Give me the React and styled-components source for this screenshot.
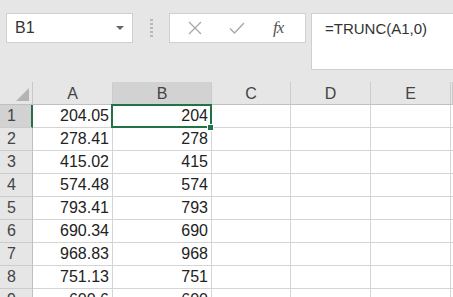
import React from "react";
import styled, { createGlobalStyle } from "styled-components";

const GlobalStyle = createGlobalStyle`
  html, body {
    margin: 0;
    padding: 0;
    background: #e6e6e6;
    overflow: hidden;
  }
  body {
    font-family: "Liberation Sans", Arial, sans-serif;
  }
`;

const Page = styled.div`
  width: 453px;
  height: 297px;
  overflow: hidden;
  background: #e6e6e6;
`;

const FormulaRow = styled.div`
  display: flex;
  align-items: flex-start;
  height: 82px;
  padding: 13px 0 0 6px;
  box-sizing: border-box;
`;

const NameBox = styled.div`
  width: 127px;
  height: 30px;
  box-sizing: border-box;
  background: #fff;
  border: 1px solid #d0d0d0;
  display: flex;
  align-items: center;
  justify-content: space-between;
  padding: 0 8px 0 8px;
  font-size: 16px;
  color: #333;
`;

const Caret = styled.span`
  width: 0;
  height: 0;
  border-left: 4px solid transparent;
  border-right: 4px solid transparent;
  border-top: 4px solid #666;
`;

const Grip = styled.div`
  width: 36px;
  height: 30px;
  display: flex;
  justify-content: center;
  align-items: center;
`;

const GripDots = styled.div`
  width: 3px;
  height: 18px;
  background: repeating-linear-gradient(
    to bottom,
    #b8b8b8 0 2px,
    transparent 2px 4px
  );
`;

const FxBar = styled.div`
  width: 137px;
  height: 30px;
  box-sizing: border-box;
  background: #fff;
  border: 1px solid #d0d0d0;
  display: flex;
  align-items: center;
  justify-content: space-around;
  padding: 0 8px 0 4px;
`;

const FxLabel = styled.span`
  font-family: "Liberation Serif", "Times New Roman", serif;
  font-style: italic;
  font-size: 17px;
  color: #555;
  letter-spacing: -1px;
`;

const FormulaBox = styled.div`
  flex: 1;
  height: 57px;
  margin-left: 5px;
  box-sizing: border-box;
  background: #fff;
  border: 1px solid #d0d0d0;
  border-right: none;
  padding: 6px 0 0 13px;
  font-size: 15px;
  color: #333;
`;

const Sheet = styled.div`
  display: grid;
  grid-template-columns: 33px 80px 99px 79px 80px 80px 2px;
  grid-auto-rows: 23px;
  background: #fff;
`;

const Corner = styled.div`
  background: #e6e6e6;
  border-right: 1px solid #c8c8c8;
  border-bottom: 1px solid #c0c0c0;
  position: relative;
  &::after {
    content: "";
    position: absolute;
    right: 3px;
    bottom: 3px;
    width: 0;
    height: 0;
    border-left: 13px solid transparent;
    border-bottom: 13px solid #b4b4b4;
  }
`;

const ColHead = styled.div`
  background: ${({ active }) => (active ? "#d2d2d2" : "#e6e6e6")};
  border-right: 1px solid #cbcbcb;
  border-bottom: 1px solid #c0c0c0;
  display: flex;
  align-items: center;
  justify-content: center;
  font-size: 16px;
  color: #444;
  padding-top: 2px;
  box-sizing: border-box;
`;

const RowHead = styled.div`
  background: ${({ active }) => (active ? "#d2d2d2" : "#e6e6e6")};
  border-right: ${({ active }) =>
    active ? "2px solid #217346" : "1px solid #c0c0c0"};
  border-bottom: 1px solid #cbcbcb;
  display: flex;
  align-items: center;
  padding-left: 7px;
  font-size: 16px;
  color: #444;
  box-sizing: border-box;
`;

const Cell = styled.div`
  position: relative;
  border-right: 1px solid #d4d4d4;
  border-bottom: 1px solid #d4d4d4;
  display: flex;
  align-items: center;
  justify-content: flex-end;
  padding-right: 3px;
  font-size: 16px;
  color: #222;
  box-sizing: border-box;
  ${({ selected }) =>
    selected &&
    `
    &::after {
      content: "";
      position: absolute;
      left: -2px;
      top: -1px;
      right: -1px;
      bottom: -1px;
      border: 2px solid #217346;
      pointer-events: none;
    }
  `}
`;

const FillHandle = styled.span`
  position: absolute;
  right: -3px;
  bottom: -4px;
  width: 5px;
  height: 5px;
  background: #217346;
  border: 1px solid #fff;
  z-index: 2;
`;

const rows = [
  ["204.05", "204"],
  ["278.41", "278"],
  ["415.02", "415"],
  ["574.48", "574"],
  ["793.41", "793"],
  ["690.34", "690"],
  ["968.83", "968"],
  ["751.13", "751"],
  ["600.6", "600"],
];

const cols = ["A", "B", "C", "D", "E"];

function CrossIcon() {
  return (
    <svg width="14" height="14" viewBox="0 0 14 14">
      <path d="M1 1 L13 13 M13 1 L1 13" stroke="#a8a8a8" strokeWidth="1.3" fill="none" />
    </svg>
  );
}

function CheckIcon() {
  return (
    <svg width="16" height="14" viewBox="0 0 16 14">
      <path d="M1 7.5 L5.5 12 L15 2" stroke="#a8a8a8" strokeWidth="1.4" fill="none" />
    </svg>
  );
}

export default function App() {
  return (
    <Page>
      <GlobalStyle />
      <FormulaRow>
        <NameBox>
          <span>B1</span>
          <Caret />
        </NameBox>
        <Grip>
          <GripDots />
        </Grip>
        <FxBar>
          <CrossIcon />
          <CheckIcon />
          <FxLabel>fx</FxLabel>
        </FxBar>
        <FormulaBox>=TRUNC(A1,0)</FormulaBox>
      </FormulaRow>
      <Sheet>
        <Corner />
        {cols.map((c) => (
          <ColHead key={c} active={c === "B"}>
            {c}
          </ColHead>
        ))}
        <ColHead />
        {rows.map(([a, b], i) => (
          <React.Fragment key={i}>
            <RowHead active={i === 0}>{i + 1}</RowHead>
            <Cell>{a}</Cell>
            <Cell selected={i === 0}>
              {b}
              {i === 0 && <FillHandle />}
            </Cell>
            <Cell />
            <Cell />
            <Cell />
            <Cell />
          </React.Fragment>
        ))}
      </Sheet>
    </Page>
  );
}
